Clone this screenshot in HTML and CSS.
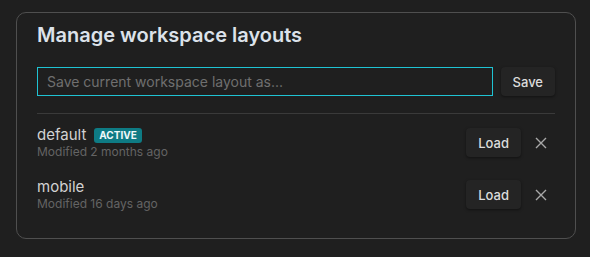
FILE: index.html
```html
<!DOCTYPE html>
<html lang="en">
<head>
    <meta charset="UTF-8">
    <meta name="viewport" content="width=device-width, initial-scale=1.0">
    <title>Manage workspace layouts</title>
    <link rel="stylesheet" href="styles.css">
</head>
<body>
    <div class="card">
        <h1>Manage workspace layouts</h1>
        <div class="save-row">
            <input type="text" class="name-input" placeholder="Save current workspace layout as...">
            <button class="btn">Save</button>
        </div>
        <div class="layouts">
            <div class="layout-row">
                <div class="layout-info">
                    <div class="layout-name">default <span class="badge">ACTIVE</span></div>
                    <div class="layout-meta">Modified 2 months ago</div>
                </div>
                <button class="btn">Load</button>
                <button class="close" aria-label="Delete">
                    <svg width="12" height="12" viewBox="0 0 12 12"><path d="M1 1L11 11M11 1L1 11" stroke="currentColor" stroke-width="1.4" fill="none"/></svg>
                </button>
            </div>
            <div class="layout-row">
                <div class="layout-info">
                    <div class="layout-name">mobile</div>
                    <div class="layout-meta">Modified 16 days ago</div>
                </div>
                <button class="btn">Load</button>
                <button class="close" aria-label="Delete">
                    <svg width="12" height="12" viewBox="0 0 12 12"><path d="M1 1L11 11M11 1L1 11" stroke="currentColor" stroke-width="1.4" fill="none"/></svg>
                </button>
            </div>
        </div>
    </div>
</body>
</html>
```

FILE: styles.css
```css
body {
    margin: 0;
    padding: 12px 14px 0 16px;
    background: #1f1f1f;
    font-family: Inter, "Noto Sans", sans-serif;
    color: #d4d4d4;
}
.card {
    width: 560px;
    box-sizing: border-box;
    padding: 8px 20px 27px;
    border: 1px solid #4f4f4f;
    border-radius: 10px;
}
h1 {
    margin: 0;
    font-size: 20px;
    line-height: 28px;
    font-weight: 600;
    color: #dce2ea;
}
.save-row {
    display: flex;
    align-items: center;
    gap: 8px;
    margin-top: 18px;
    padding-bottom: 17px;
    border-bottom: 1px solid #3a3a3a;
}
.name-input {
    flex: 1;
    height: 29px;
    box-sizing: border-box;
    padding: 0 9px;
    background: transparent;
    border: 1px solid #1fc3d3;
    border-radius: 0;
    outline: none;
    font-family: inherit;
    font-size: 14px;
    color: #ddd;
}
.name-input::placeholder {
    color: #6f6f6f;
}
.btn {
    height: 29px;
    padding: 0 12px;
    background: #242424;
    border: none;
    border-radius: 4px;
    box-shadow: 0 1px 3px rgba(0, 0, 0, 0.45);
    font-family: inherit;
    font-size: 13px;
    font-weight: 500;
    color: #dcdcdc;
}
.layouts {
    display: flex;
    flex-direction: column;
    gap: 19px;
    margin-top: 12px;
}
.layout-row {
    display: flex;
    align-items: center;
    gap: 6px;
}
.layout-info {
    flex: 1;
}
.layout-name {
    display: flex;
    align-items: center;
    gap: 8px;
    font-size: 15px;
    line-height: 18px;
    color: #d2d2d2;
}
.badge {
    padding: 0 5px;
    height: 15px;
    line-height: 15px;
    border-radius: 3px;
    background: #0e7b84;
    color: #eef8f9;
    font-size: 10px;
    font-weight: 700;
}
.layout-meta {
    font-size: 12px;
    line-height: 15px;
    color: #646464;
}
.close {
    width: 28px;
    height: 28px;
    padding: 0;
    display: flex;
    align-items: center;
    justify-content: center;
    background: none;
    border: none;
    color: #a8a8a8;
}
```
